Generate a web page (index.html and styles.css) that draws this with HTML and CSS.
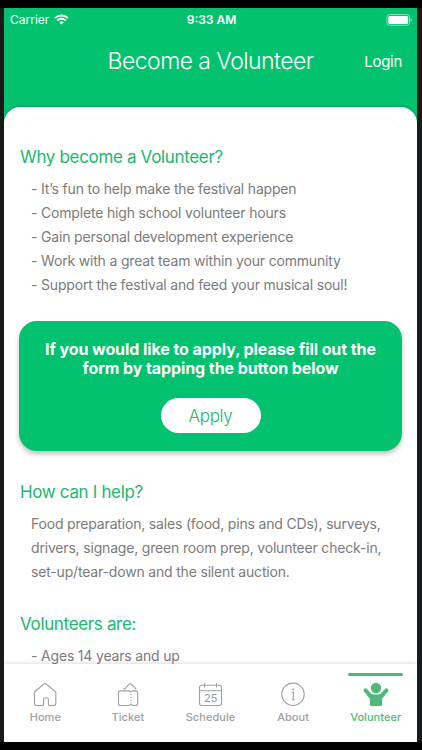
FILE: index.html
```html
<!DOCTYPE html>
<html lang="en">
<head>
    <meta charset="UTF-8">
    <meta name="viewport" content="width=device-width, initial-scale=1.0">
    <title>Become a Volunteer</title>
    <link rel="stylesheet" href="styles.css">
</head>
<body>
    <div class="screen">
        <header class="header">
            <!-- Status bar -->
            <div class="status-bar">
                <div class="carrier">
                    <span>Carrier</span>
                    <svg width="15" height="11" viewBox="0 0 15 11" fill="none" stroke="#fff" stroke-width="1.9">
                        <path d="M1 4.1a9.3 9.3 0 0 1 13 0"/>
                        <path d="M3.3 6.5a6 6 0 0 1 8.4 0"/>
                        <path d="M7.5 10.5L5.3 8.3a3.1 3.1 0 0 1 4.4 0z" fill="#fff" stroke="none"/>
                    </svg>
                </div>
                <span class="time">9:33 AM</span>
                <svg class="battery" width="27" height="12" viewBox="0 0 27 12">
                    <rect x="0.9" y="0.5" width="22.6" height="10.8" rx="2.8" fill="none" stroke="#fff" stroke-opacity="0.55" stroke-width="0.9"/>
                    <rect x="2.3" y="1.9" width="19.8" height="8" rx="1.5" fill="#fff"/>
                    <path d="M24.6 4v3.8q1.4-.6 1.4-1.9t-1.4-1.9z" fill="#fff" fill-opacity="0.55"/>
                </svg>
            </div>

            <div class="title-bar">
                <h1>Become a Volunteer</h1>
                <a class="login" href="#">Login</a>
            </div>
        </header>

        <main class="content">
            <div class="card-top"></div>

            <h2>Why become a Volunteer?</h2>
            <ul>
                <li>- It’s fun to help make the festival happen</li>
                <li>- Complete high school volunteer hours</li>
                <li>- Gain personal development experience</li>
                <li>- Work with a great team within your community</li>
                <li>- Support the festival and feed your musical soul!</li>
            </ul>

            <section class="apply-box">
                <p>If you would like to apply, please fill out the<br>form by tapping the button below</p>
                <button type="button">Apply</button>
            </section>

            <h2>How can I help?</h2>
            <p class="help">Food preparation, sales (food, pins and CDs), surveys,<br>drivers, signage, green room prep, volunteer check-in,<br>set-up/tear-down and the silent auction.</p>

            <h2>Volunteers are:</h2>
            <ul>
                <li>- Ages 14 years and up</li>
            </ul>
        </main>

        <!-- Bottom tabs -->
        <nav class="tabs">
            <a class="tab" href="#">
                <svg width="26" height="26" viewBox="0 0 26 26">
                    <path d="M2.5 11L11.8 3q1.2-1 2.4 0l9.6 8V22.5a2 2 0 0 1-2 2h-4.4a1 1 0 0 1-1-1v-5.5a1 1 0 0 0-1-1h-2.8a1 1 0 0 0-1 1v5.5a1 1 0 0 1-1 1H4.500a2 2 0 0 1-2-2z"/>
                </svg>
                <span>Home</span>
            </a>
            <a class="tab" href="#">
                <svg width="26" height="26" viewBox="0 0 26 26">
                    <path d="M13.8 9.9H5.5a2 2 0 0 0-2 2v10.600a2 2 0 0 0 2 2h8.300q1 0 1.500-.9.600-.6 1.200 0 .5.900 1.500.9h2.700a2 2 0 0 0 2-2V11.900a2 2 0 0 0-2-2H18q-1 0-1.500.8-.6.500-1.200 0-.5-.8-1.500-.8z"/>
                    <path d="M8.200 7.900h1.300q1.200-.1 1.600-1.300l3-3.600q.9-.9 1.800 0l5.400 5.100"/>
                    <path d="M16 13v9.500" stroke-dasharray="1.300 1.500"/>
                </svg>
                <span>Ticket</span>
            </a>
            <a class="tab" href="#">
                <svg width="26" height="26" viewBox="0 0 26 26">
                    <rect x="2.500" y="4.200" width="22" height="20.300" rx="2.200"/>
                    <path d="M2.500 9.800h22M7.500 2v4.600M19.500 2v4.600"/>
                    <text x="13.700" y="21.300" text-anchor="middle">25</text>
                </svg>
                <span>Schedule</span>
            </a>
            <a class="tab" href="#">
                <svg width="26" height="26" viewBox="0 0 26 26">
                    <circle cx="13" cy="13.300" r="11.200"/>
                    <path d="M11.800 11.400h1.500v7.300M11.800 18.700h3"/>
                    <circle class="dot" cx="13.100" cy="8.600" r="1"/>
                </svg>
                <span>About</span>
            </a>
            <a class="tab active" href="#">
                <svg width="26" height="26" viewBox="0 0 26 26">
                    <circle cx="13" cy="7" r="5.200"/>
                    <path d="M4 8a2 2 0 0 0-3.100 2.500l5.900 7V24a1 1 0 0 0 1 1h10.400a1 1 0 0 0 1-1V17.500l5.900-7A2 2 0 0 0 22 8l-4.600 4.900q-4.400 1-8.800 0z"/>
                </svg>
                <span>Volunteer</span>
            </a>
        </nav>
    </div>
</body>
</html>
```
FILE: styles.css
```css
* {
    box-sizing: border-box;
}

body {
    margin: 0;
    height: 750px;
    padding: 8px 5px 8px 4px;
    background-color: #000;
    font-family: Inter, "Liberation Sans", sans-serif;
    overflow: hidden;
}

h1, h2, p, ul {
    margin: 0;
    padding: 0;
    font-weight: 400;
}

ul {
    list-style: none;
}

a {
    text-decoration: none;
}

.screen {
    display: flex;
    flex-direction: column;
    height: 734px;
    background-color: #03c26f;
    box-shadow: -5px 0 #1b1916, 5px 0 #191a1c;
    overflow: hidden;
}

.header {
    flex: none;
    height: 99px;
    color: #fff;
}

.status-bar {
    display: grid;
    grid-template-columns: 1fr auto 1fr;
    align-items: center;
    height: 23px;
    padding: 0 4px 0 6px;
    font-size: 12px;
    line-height: 15px;
}

.carrier {
    display: flex;
    align-items: center;
    gap: 5px;
}

.time {
    font-weight: 600;
}

.battery {
    justify-self: end;
}

.title-bar {
    display: grid;
    grid-template-columns: 1fr auto 1fr;
    align-items: center;
    height: 60px;
    padding: 0 15px;
}

.title-bar h1 {
    grid-column: 2;
    font-size: 23px;
    font-weight: 350;
    letter-spacing: -0.55px;
}

.login {
    justify-self: end;
    color: #fff;
    font-size: 15px;
    letter-spacing: -0.3px;
}

.content {
    flex: 1;
    min-height: 0;
    padding: 11px 15px 0;
    background-color: #fff;
    border-radius: 16px 16px 0 0;
    box-shadow: 0 -1px 2px rgba(0, 0, 0, 0.2);
    overflow: hidden;
}

.card-top {
    height: 27px;
    border-radius: 18px 18px 0 0;
    box-shadow: inset 0 1px 1px rgba(0, 0, 0, 0.02);
}

.content h2 {
    padding-left: 1px;
    color: #20b76e;
    font-size: 17px;
    line-height: 24px;
    letter-spacing: -0.34px;
}

.content li,
.help {
    padding-left: 12px;
    color: #7b7b7b;
    font-size: 14px;
    line-height: 24px;
    letter-spacing: -0.18px;
    white-space: nowrap;
}

.content ul,
.help {
    padding-top: 8px;
}

.apply-box {
    height: 130px;
    margin: 24px 0 29px;
    padding-top: 19px;
    border-radius: 18px;
    background-color: #03c26f;
    box-shadow: 0 3px 5px rgba(0, 0, 0, 0.25);
    color: #fff;
    text-align: center;
}

.apply-box p {
    font-size: 16px;
    font-weight: 700;
    line-height: 19px;
    letter-spacing: -0.08px;
    white-space: nowrap;
}

.apply-box button {
    width: 100px;
    height: 35px;
    margin-top: 20px;
    padding: 0;
    border: none;
    border-radius: 18px;
    background-color: #fff;
    color: #20b76e;
    font-family: inherit;
    font-size: 17px;
    font-weight: 350;
    letter-spacing: -0.3px;
}

.help {
    margin-bottom: 28px;
}

.tabs {
    position: relative;
    display: grid;
    flex: none;
    grid-template-columns: repeat(5, 1fr);
    height: 78px;
    background-color: #fff;
    box-shadow: 0 0 5px rgba(0, 0, 0, 0.2);
}

.tab {
    display: flex;
    flex-direction: column;
    align-items: center;
    padding-top: 17px;
    color: #a0a0a0;
    font-size: 11px;
    font-weight: 450;
    line-height: 14px;
    letter-spacing: 0.05px;
}

.tab svg {
    display: block;
    margin-bottom: 3px;
    fill: none;
    stroke: #a0a0a0;
    stroke-width: 1.1;
}

.tab text {
    fill: #999;
    stroke: none;
    font-size: 11px;
    font-weight: 400;
}

.tab .dot {
    fill: #a0a0a0;
    stroke: none;
}

.tab.active {
    position: relative;
    color: #50b878;
}

.tab.active svg {
    fill: #50b878;
    stroke: none;
}

.tab.active::before {
    content: "";
    position: absolute;
    top: 9px;
    width: 55px;
    height: 3px;
    border-radius: 2px;
    background-color: #50b878;
}
```
